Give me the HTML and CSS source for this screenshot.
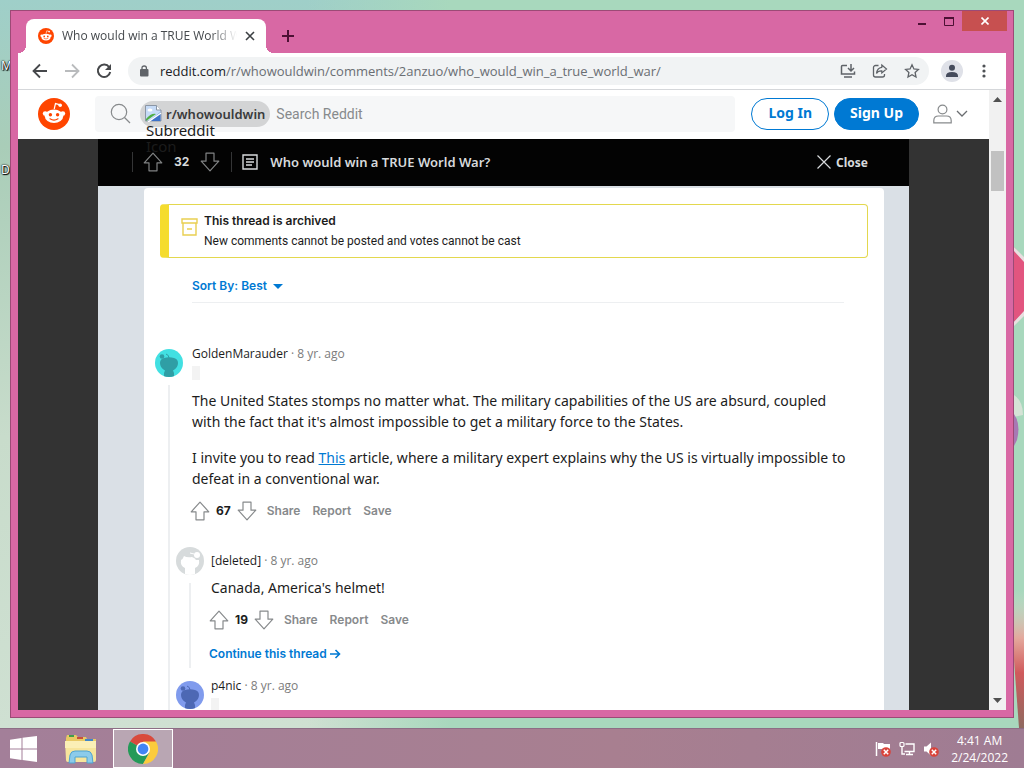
FILE: index.html
```html
<!DOCTYPE html>
<html lang="en">
<head>
<meta charset="utf-8">
<title>Who would win a TRUE World War?</title>
<link rel="stylesheet" href="styles.css">
</head>
<body>
<svg class="defs" aria-hidden="true">
  <linearGradient id="petal" x1="0" y1="0" x2="0" y2="1">
    <stop offset="0" stop-color="#d8dccf" stop-opacity="0"/>
    <stop offset=".35" stop-color="#e4a89c"/>
    <stop offset=".6" stop-color="#d05a5c"/>
    <stop offset="1" stop-color="#8f6a60"/>
  </linearGradient>
  <symbol id="snoo" viewBox="0 0 32 32">
    <circle cx="16" cy="16" r="16" fill="#ff4500"/>
    <path d="M16.2 11l1.3-5.4 4 1" fill="none" stroke="#fff" stroke-width="1.2"/>
    <circle cx="22.2" cy="7.2" r="1.8" fill="#fff"/>
    <circle cx="7.2" cy="15.6" r="2.4" fill="#fff"/>
    <circle cx="24.8" cy="15.6" r="2.4" fill="#fff"/>
    <ellipse cx="16" cy="18.2" rx="9.2" ry="6.8" fill="#fff"/>
    <circle cx="12.4" cy="16.8" r="1.7" fill="#ff4500"/>
    <circle cx="19.6" cy="16.8" r="1.7" fill="#ff4500"/>
    <path d="M12 20.8q4 2.6 8 0" fill="none" stroke="#ff4500" stroke-width="1.2" stroke-linecap="round"/>
  </symbol>
  <symbol id="up" viewBox="0 0 20 20">
    <path d="M10 1.2L1.2 10.8H6v8h8v-8h4.8z" fill="none" stroke="currentColor" stroke-width="1.2" stroke-linejoin="round"/>
  </symbol>
  <symbol id="down" viewBox="0 0 20 20">
    <path d="M10 18.8L1.2 9.2H6v-8h8v8h4.8z" fill="none" stroke="currentColor" stroke-width="1.2" stroke-linejoin="round"/>
  </symbol>
  <symbol id="avatar" viewBox="0 0 28 28">
    <path d="M5 14q0-4 4-5 5-1.500 10 0 4 1 4 5 0 5-5 7.500l1 2.500v4H9v-4l1-2.500q-5-2.500-5-7.500z" fill="currentColor"/>
    <circle cx="7" cy="7.500" r="2.300" fill="currentColor"/>
    <path d="M14 9q0-3-3-4" fill="none" stroke="currentColor" stroke-width="1"/>
  </symbol>
  <symbol id="avatar-plain" viewBox="0 0 28 28">
    <path d="M5 13q2-1 3-4 3 2 8 1 3 1 4 3l3 0q1 6-4 8v7H9v-7q-5-2-4-8z" fill="currentColor"/>
    <circle cx="21" cy="8" r="3" fill="currentColor"/>
    <path d="M14 6l4 1" stroke="currentColor"/>
  </symbol>
</svg>

<main class="desktop">
  <span class="desk-label desk-label-a">M</span>
  <span class="desk-label desk-label-b">D</span>
  <svg class="wallpaper" viewBox="0 0 10 728" preserveAspectRatio="none" aria-hidden="true">
    <path d="M0 247l10 12v53L0 322z" fill="#e2557f"/>
    <path d="M0 247l10 10v5L0 251zM0 322l10-11v5L0 326z" fill="#e8dfe0"/>
    <path d="M0 395q9 6 9 20l-9 2z" fill="#d5e3d6"/>
    <path d="M0 414q7 10 3 26l-3 6z" fill="#a878b4"/>
    <path d="M0 590h10v138H5L0 660z" fill="url(#petal)"/>
  </svg>

  <section class="window">
    <header class="titlebar">
      <div class="tab">
        <svg class="favicon"><use href="#snoo"/></svg>
        <span class="tab-title">Who would win a TRUE World War?</span>
        <button class="bare" aria-label="Close tab"><svg width="10" height="10" viewBox="0 0 10 10"><path d="M1 1l8 8M9 1l-8 8" stroke="#3c4043" stroke-width="1.600"/></svg></button>
      </div>
      <button class="bare new-tab" aria-label="New tab"><svg width="12" height="12" viewBox="0 0 12 12"><path d="M6 0v12M0 6h12" stroke="#4d1034" stroke-width="2"/></svg></button>
      <div class="win-controls">
        <button class="win-btn" aria-label="Minimize"><svg width="10" height="10" viewBox="0 0 10 10"><path d="M1 8h8" stroke="#4d1034" stroke-width="2"/></svg></button>
        <button class="win-btn" aria-label="Maximize"><svg width="10" height="9" viewBox="0 0 10 9"><path d="M.5 1v7.500h9V1" fill="none" stroke="#4d1034"/><path d="M0 1h10" stroke="#4d1034" stroke-width="2"/></svg></button>
        <button class="win-btn win-close" aria-label="Close"><svg width="8" height="8" viewBox="0 0 8 8"><path d="M.5.500l7 7M7.500.500l-7 7" stroke="#fff" stroke-width="1.600"/></svg></button>
      </div>
    </header>

    <div class="toolbar">
      <nav class="nav-buttons">
        <button class="bare" aria-label="Back"><svg width="16" height="16" viewBox="0 0 16 16"><path d="M15 8H2M8 1.500L1.500 8 8 14.500" fill="none" stroke="#46484b" stroke-width="1.800"/></svg></button>
        <button class="bare" aria-label="Forward"><svg width="16" height="16" viewBox="0 0 16 16"><path d="M1 8h13M8 1.500L14.500 8 8 14.500" fill="none" stroke="#b9bbbd" stroke-width="1.800"/></svg></button>
        <button class="bare" aria-label="Reload"><svg width="16" height="16" viewBox="0 0 16 16"><path d="M13.200 4.200A6.200 6.200 0 1 0 14.200 9" fill="none" stroke="#46484b" stroke-width="2"/><path d="M15 1v6H9z" fill="#46484b"/></svg></button>
      </nav>
      <div class="omnibox">
        <svg width="10" height="12" viewBox="0 0 10 12"><rect x="1" y="4" width="8.500" height="7.500" rx="1" fill="#5f6368"/><path d="M3 5V3q0-2 2.200-2t2.200 2v2" fill="none" stroke="#5f6368" stroke-width="1.300"/></svg>
        <span class="url"><b>reddit.com</b>/r/whowouldwin/comments/2anzuo/who_would_win_a_true_world_war/</span>
        <button class="bare" aria-label="Install app"><svg width="16" height="16" viewBox="0 0 16 16"><path d="M7 2.500H2.500a1 1 0 0 0-1 1V11h13V8.500M4 14h8M11 1v6.500M8 5l3 3 3-3" fill="none" stroke="#5f6368" stroke-width="1.500"/></svg></button>
        <button class="bare" aria-label="Share page"><svg width="16" height="16" viewBox="0 0 16 16"><path d="M6.500 2.500H3.500a2 2 0 0 0-2 2V12a2 2 0 0 0 2 2h7a2 2 0 0 0 2-2v-1" fill="none" stroke="#5f6368" stroke-width="1.300"/><path d="M9.800 2L14.500 6 9.800 10V7.800Q6 7.600 4.500 10.500 5 5 9.800 4.300z" fill="none" stroke="#5f6368" stroke-width="1.200"/></svg></button>
        <button class="bare" aria-label="Bookmark"><svg width="16" height="16" viewBox="0 0 16 16"><path d="M8 1.800l1.900 4.100 4.500.5-3.300 3.100.9 4.500L8 11.700 4 14l.9-4.500L1.600 6.400l4.500-.5z" fill="none" stroke="#5f6368" stroke-width="1.300"/></svg></button>
      </div>
      <button class="bare profile" aria-label="Profile"><svg width="22" height="22" viewBox="0 0 22 22"><circle cx="11" cy="11" r="11" fill="#dfe1e8"/><circle cx="11" cy="7.800" r="3" fill="#454b5c"/><path d="M5 16q0-4 6-4t6 4v1H5z" fill="#454b5c"/></svg></button>
      <button class="bare menu-dots" aria-label="Menu"><svg width="4" height="14" viewBox="0 0 4 14"><g fill="#4f5256"><circle cx="2" cy="2" r="1.600"/><circle cx="2" cy="7" r="1.600"/><circle cx="2" cy="12" r="1.600"/></g></svg></button>
    </div>

    <div class="viewport">
      <div class="page">
        <header class="site-header">
          <a class="logo" href="#" aria-label="Reddit"><svg width="32" height="32"><use href="#snoo"/></svg></a>
          <div class="search">
            <svg width="21" height="21" viewBox="0 0 21 21"><circle cx="9" cy="9" r="7.700" fill="none" stroke="#878a8c" stroke-width="1.200"/><path d="M14.500 14.500l5.500 5.500" stroke="#878a8c" stroke-width="1.200"/></svg>
            <span class="chip">
              <svg width="17" height="17" viewBox="0 0 17 17"><path d="M.5.500h11l4.500 4.500v11H.5z" fill="#c6dbf7" stroke="#8b96a5"/><path d="M11.500.500V5H16" fill="#fff" stroke="#8b96a5"/><ellipse cx="5" cy="5" rx="2.500" ry="1.500" fill="#fff"/><path d="M1 16v-2q5-6 10-5z" fill="#4fae45"/><path d="M4 16L15.500 7v9z" fill="#3d72c9"/><path d="M3 17L16 8" stroke="#fff" stroke-width="1.500"/></svg>
              r/whowouldwin
              <span class="alt-text">Subreddit Icon</span>
            </span>
            <input class="search-input" type="text" aria-label="Search Reddit" placeholder="Search Reddit">
          </div>
          <div class="account">
            <button class="pill pill-outline">Log In</button>
            <button class="pill pill-solid">Sign Up</button>
            <button class="bare user-menu" aria-label="User menu"><svg width="19" height="20" viewBox="0 0 19 20"><g fill="none" stroke="#878a8c" stroke-width="1.200"><circle cx="9.500" cy="5.500" r="4.400"/><path d="M.8 18.800v-2q0-4.800 4.700-4.800h8q4.700 0 4.700 4.800v2z"/></g></svg><svg width="12" height="8" viewBox="0 0 12 8"><path d="M1 1l5 5 5-5" fill="none" stroke="#6a6d70" stroke-width="1.300"/></svg></button>
          </div>
        </header>

        <div class="backdrop">
          <div class="overlay">
            <div class="post-bar">
              <div class="post-votes">
                <button class="bare" aria-label="Upvote post"><svg class="arrow"><use href="#up"/></svg></button>
                <span>32</span>
                <button class="bare" aria-label="Downvote post"><svg class="arrow"><use href="#down"/></svg></button>
              </div>
              <svg width="16" height="16" viewBox="0 0 16 16"><path d="M1 1h14v14H1zM4 5h8M4 8h8M4 11h6" fill="none" stroke="#d7dadc" stroke-width="1.400"/></svg>
              <h1 class="post-title">Who would win a TRUE World War?</h1>
              <button class="bare close-post"><svg width="14" height="14" viewBox="0 0 14 14"><path d="M.5.500l13 13M13.500.500l-13 13" stroke="#d7dadc" stroke-width="1.200"/></svg>Close</button>
            </div>

            <div class="thread">
              <div class="archived">
                <svg width="17" height="18" viewBox="0 0 17 18"><path d="M1 1h15v4H1zM2 5v12h13V5M6 11h5" fill="none" stroke="#e9cf52" stroke-width="1.400"/></svg>
                <div>
                  <strong>This thread is archived</strong>
                  <p>New comments cannot be posted and votes cannot be cast</p>
                </div>
              </div>

              <div class="sort"><button class="bare sort-btn">Sort By: Best <svg width="10" height="5" viewBox="0 0 10 5"><path d="M0 0h10L5 5z" fill="#0079d3"/></svg></button></div>

              <article class="comment">
                <div class="rail">
                  <svg class="avatar avatar-teal"><use href="#avatar"/></svg>
                  <i class="line"></i>
                </div>
                <div class="comment-main">
                  <p class="byline"><a href="#">GoldenMarauder</a> · 8 yr. ago</p>
                  <span class="flair"></span>
                  <div class="text">
                    <p>The United States stomps no matter what. The military capabilities of the US are absurd, coupled with the fact that it's almost impossible to get a military force to the States.</p>
                    <p>I invite you to read <a href="#">This</a> article, where a military expert explains why the US is virtually impossible to defeat in a conventional war.</p>
                  </div>
                  <div class="actions">
                    <button class="bare" aria-label="Upvote"><svg class="arrow"><use href="#up"/></svg></button>
                    <b>67</b>
                    <button class="bare" aria-label="Downvote"><svg class="arrow"><use href="#down"/></svg></button>
                    <button class="bare action">Share</button>
                    <button class="bare action">Report</button>
                    <button class="bare action">Save</button>
                  </div>

                  <div class="replies">
                    <article class="comment reply reply-short">
                      <div class="rail">
                        <svg class="avatar avatar-grey"><use href="#avatar-plain"/></svg>
                        <i class="line"></i>
                      </div>
                      <div class="comment-main">
                        <p class="byline"><a href="#">[deleted]</a> · 8 yr. ago</p>
                        <div class="text"><p>Canada, America's helmet!</p></div>
                        <div class="actions">
                          <button class="bare" aria-label="Upvote"><svg class="arrow"><use href="#up"/></svg></button>
                          <b>19</b>
                          <button class="bare" aria-label="Downvote"><svg class="arrow"><use href="#down"/></svg></button>
                          <button class="bare action">Share</button>
                          <button class="bare action">Report</button>
                          <button class="bare action">Save</button>
                        </div>
                        <a class="continue" href="#">Continue this thread<svg width="11" height="10" viewBox="0 0 11 10"><path d="M0 5h9M5.500 1l4 4-4 4" fill="none" stroke="#0079d3" stroke-width="1.600"/></svg></a>
                      </div>
                    </article>
                    <article class="comment reply">
                      <div class="rail"><svg class="avatar avatar-blue"><use href="#avatar"/></svg></div>
                      <div class="comment-main">
                        <p class="byline"><a href="#">p4nic</a> · 8 yr. ago</p>
                        <span class="flair"></span>
                      </div>
                    </article>
                  </div>
                </div>
              </article>
            </div>
          </div>
        </div>
      </div>

      <div class="scrollbar" aria-hidden="true">
        <svg width="9" height="5" viewBox="0 0 9 5"><path d="M0 5l4.500-5L9 5z" fill="#505050"/></svg>
        <div class="track"><div class="thumb"></div></div>
        <svg width="9" height="5" viewBox="0 0 9 5"><path d="M0 0l4.500 5L9 0z" fill="#505050"/></svg>
      </div>
    </div>
  </section>
</main>

<footer class="taskbar">
  <button class="task" aria-label="Start"><svg width="28" height="26" viewBox="0 0 28 26"><path d="M0 3.800l11.500-1.800v10.500H0zM12.500 1.800L27 0v12.500H12.500zM0 13.500h11.500V24L0 22.200zM12.500 13.500H27V26l-14.500-1.900z" fill="#fff"/></svg></button>
  <button class="task" aria-label="File Explorer"><svg width="34" height="30" viewBox="0 0 34 30"><path d="M2 4l1-3h9l2 2h8l1 2h9v4H2z" fill="#e8c964"/><path d="M5 2h5" stroke="#3f9d4c" stroke-width="2"/><path d="M13 4h6" stroke="#c7503a" stroke-width="2"/><path d="M21 6h8" stroke="#3f86c8" stroke-width="2"/><path d="M1 7h31v19q0 2-2 2H4q-2 0-2-2z" fill="#f7e59c"/><path d="M1 7h31v7H1z" fill="#fbefb6"/><path d="M5 29l1-8q1-4 5-4h12q4 0 5 4l1 8h-6v-6H11v6z" fill="#8ccbea" stroke="#4fa3d0"/></svg></button>
  <button class="task task-active" aria-label="Chrome"><svg width="30" height="30" viewBox="0 0 30 30"><path d="M15 15L2 7.500A15 15 0 0 1 28 7.500z" fill="#d94a3d"/><path d="M15 15L2 7.500A15 15 0 0 0 15 30l6-11z" fill="#249a58"/><path d="M15 7.500h13A15 15 0 0 1 15 30l6.500-11.200z" fill="#fbcb3c"/><circle cx="15" cy="15" r="7" fill="#fff"/><circle cx="15" cy="15" r="5.400" fill="#4285f4"/></svg></button>
  <div class="tray">
    <svg width="16" height="16" viewBox="0 0 16 16"><path d="M1.500 1v14" stroke="#fff" stroke-width="1.500"/><path d="M3 2h5l1 1h6v6H8L7 8H3z" fill="#fff"/><circle cx="11" cy="11" r="4.800" fill="#d9433a"/><path d="M8.800 8.800l4.400 4.400M13.200 8.800l-4.400 4.400" stroke="#fff" stroke-width="1.500"/></svg>
    <svg width="16" height="16" viewBox="0 0 16 16"><path d="M6.500 3H15v7.500H5.500M10.500 10.500V13M7 13.500h7M3 6v7h3" fill="none" stroke="#fff" stroke-width="1.400"/><rect x="1" y="1.500" width="4" height="4" rx="1" fill="none" stroke="#fff" stroke-width="1.200"/></svg>
    <svg width="16" height="16" viewBox="0 0 16 16"><path d="M1 5.500h2.500L8 1.500v13l-4.500-4H1z" fill="#fff"/><circle cx="11" cy="11" r="4.800" fill="#d9433a"/><path d="M8.800 8.800l4.400 4.400M13.200 8.800l-4.400 4.400" stroke="#fff" stroke-width="1.500"/></svg>
  </div>
  <div class="clock"><span>4:41 AM</span><span>2/24/2022</span></div>
</footer>
</body>
</html>
```

FILE: styles.css
```css
* { box-sizing: border-box; }

body {
  margin: 0;
  height: 100vh;
  display: flex;
  flex-direction: column;
  overflow: hidden;
  font-family: "Noto Sans", "Open Sans", sans-serif;
  color: #1c1c1c;
}

p, h1 { margin: 0; }
svg { display: block; flex: none; }
.defs { position: absolute; width: 0; height: 0; }

.bare {
  display: flex;
  align-items: center;
  padding: 0;
  border: 0;
  background: none;
  color: inherit;
  font: inherit;
}

/* Desktop */
.desktop {
  position: relative;
  flex: 1;
  min-height: 0;
  display: flex;
  padding: 10px;
  background: linear-gradient(#9fcfc9, #a9cdb8 20%, #c8dccb 60%, #cfe0d2);
}
.desktop::before {
  content: "";
  position: absolute;
  inset: 0 0 0 30%;
  background: linear-gradient(90deg, transparent, #a8d8bd 20%);
}
.wallpaper { position: absolute; right: 0; top: 0; width: 10px; height: 100%; }
.desk-label {
  position: absolute;
  left: 1px;
  font-size: 12px;
  line-height: 16px;
  color: #fff;
  text-shadow: 0 0 2px #000, 0 0 1px #000, 1px 1px 1px #000;
}
.desk-label-a { top: 58px; }
.desk-label-b { top: 162px; }

.window {
  position: relative;
  flex: 1;
  min-width: 0;
  display: flex;
  flex-direction: column;
  padding: 0 7px 7px;
  border: 1px solid #9c4a76;
  background: #d868a4;
}

/* Browser chrome */
.titlebar { display: flex; height: 42px; }
.tab {
  position: relative;
  display: flex;
  align-items: center;
  gap: 8px;
  width: 240px;
  margin: 8px 0 0 8px;
  padding: 0 11px 0 12px;
  border-radius: 8px 8px 0 0;
  background: #fff;
}
.tab::before,
.tab::after {
  content: "";
  position: absolute;
  bottom: 0;
  width: 8px;
  height: 8px;
}
.tab::before { right: 100%; background: radial-gradient(circle at 0 0, transparent 8px, #fff 8px); }
.tab::after { left: 100%; background: radial-gradient(circle at 100% 0, transparent 8px, #fff 8px); }
.favicon { width: 16px; height: 16px; }
.tab-title {
  flex: 1;
  overflow: hidden;
  white-space: nowrap;
  font-family: "Open Sans", sans-serif;
  font-size: 12px;
  line-height: 16px;
  color: #45494d;
  mask-image: linear-gradient(90deg, #000 85%, transparent);
}
.new-tab { align-self: center; margin: 8px 0 0 16px; }
.win-controls { display: flex; align-items: flex-start; margin: 0 -1px 0 auto; }
.win-btn {
  display: grid;
  place-items: center;
  width: 27px;
  height: 20px;
  padding: 0;
  border: 0;
  background: none;
}
.win-close { width: 45px; background: #c75050; }

.toolbar {
  display: flex;
  align-items: center;
  height: 37px;
  padding: 0 20px 0 14px;
  border-bottom: 1px solid #d5d7da;
  background: #fff;
}
.nav-buttons { display: flex; gap: 16px; }
.omnibox {
  flex: 1;
  display: flex;
  align-items: center;
  gap: 16px;
  height: 28px;
  margin: 0 12px 0 16px;
  padding: 0 9px 0 11px;
  border-radius: 14px;
  background: #f1f3f4;
}
.url {
  flex: 1;
  margin-left: -5px;
  font-family: "Open Sans", sans-serif;
  font-size: 13px;
  line-height: 20px;
  color: #6a6e73;
}
.url b { font-weight: 400; color: #202124; }
.menu-dots { margin-left: 19px; }

.viewport { flex: 1; min-height: 0; display: flex; }
.page { flex: 1; min-width: 0; display: flex; flex-direction: column; }
.scrollbar {
  display: flex;
  flex-direction: column;
  align-items: center;
  width: 17px;
  padding: 7px 0;
  background: #f1f1f1;
}
.track { flex: 1; align-self: stretch; padding: 49px 2px 0; }
.thumb { height: 40px; background: #c1c1c1; }

/* Site header */
.site-header {
  display: flex;
  align-items: center;
  height: 49px;
  padding: 0 21px 2px 20px;
  background: #fff;
}
.search {
  flex: 1;
  display: flex;
  align-items: center;
  height: 36px;
  margin: 0 16px 0 25px;
  padding-left: 15px;
  border-radius: 4px;
  background: #f6f7f8;
}
.chip {
  position: relative;
  display: flex;
  align-items: center;
  gap: 4px;
  margin-left: 9px;
  padding: 0 5px;
  border-radius: 13px;
  background: #d3d4d5;
  font-family: "Noto Sans", sans-serif;
  font-size: 13px;
  font-weight: 600;
  line-height: 26px;
  color: #3a3b3c;
}
.alt-text {
  position: absolute;
  z-index: 1;
  left: 6px;
  top: 21px;
  width: 80px;
  font-size: 15px;
  font-weight: 400;
  line-height: 16px;
  color: #1c1c1c;
}
.search-input {
  flex: 1;
  min-width: 0;
  padding: 0 6px;
  border: 0;
  background: none;
  font-family: Roboto, sans-serif;
  font-size: 14px;
}
.search-input::placeholder { color: #878a8c; }
.account { display: flex; align-items: center; gap: 5px; }
.pill {
  height: 32px;
  padding: 0 15px 2px;
  border: 1px solid #0079d3;
  border-radius: 16px;
  font-family: "Noto Sans", sans-serif;
  font-size: 14px;
  line-height: 20px;
  font-weight: 700;
}
.pill-outline { padding: 0 16px 2px; background: #fff; color: #0079d3; }
.pill-solid { background: #0079d3; color: #fff; }
.user-menu { gap: 4px; margin-left: 9px; }

/* Post overlay */
.backdrop { flex: 1; min-height: 0; display: flex; padding: 0 80px; background: #333; }
.overlay {
  flex: 1;
  min-width: 0;
  display: flex;
  flex-direction: column;
  overflow: hidden;
  background: #dae0e6;
}
.post-bar {
  flex: none;
  display: flex;
  align-items: center;
  height: 47px;
  padding: 0 41px 1px 34px;
  background: #030303;
  color: #d7dadc;
}
.post-votes {
  display: flex;
  align-items: center;
  gap: 11px;
  padding: 0 11px 0 10px;
  margin-right: 10px;
  border: solid #343536;
  border-width: 0 1px;
  font: 700 12px/16px Inter, sans-serif;
}
.post-votes .arrow { color: #818384; }
.post-title { margin-left: 12px; font-size: 13px; font-weight: 600; line-height: 20px; }
.close-post { margin-left: auto; gap: 5px; font-size: 12px; font-weight: 700; }
.arrow { width: 20px; height: 20px; }

.thread {
  flex: 1;
  margin: 2px 25px 0 46px;
  padding: 16px 16px 0;
  border-radius: 4px 4px 0 0;
  background: #fff;
}
.archived {
  display: flex;
  align-items: flex-start;
  gap: 6px;
  padding: 6px 12px;
  border: 1px solid #e3d84e;
  border-left: 9px solid #f5dc2e;
  border-radius: 4px;
  font: 12px/20px Roboto, sans-serif;
}
.archived svg { margin-top: 7px; }
.archived strong { display: block; font-family: Inter, sans-serif; font-weight: 600; }

.sort {
  margin: 18px 24px 0 32px;
  padding-bottom: 6px;
  border-bottom: 1px solid #edeff1;
}
.sort-btn {
  gap: 6px;
  color: #0079d3;
  font: 600 12px/20px Inter, sans-serif;
}

/* Comments */
.comment { display: flex; gap: 9px; margin: 43px 22px 0 -5px; }
.rail { display: flex; flex-direction: column; align-items: center; gap: 8px; width: 28px; padding-top: 3px; }
.line { flex: 1; width: 2px; background: #edeff1; }
.avatar { width: 28px; height: 28px; border-radius: 50%; }
.avatar-teal { background: #42e0e2; color: #2f9ea5; }
.avatar-grey { background: #d7dbdc; color: #fff; }
.avatar-blue { background: #809bed; color: #4d68b4; }
.comment-main { flex: 1; min-width: 0; }
.byline { font: 12px/16px "Open Sans", sans-serif; color: #7c7c7c; }
.byline a { color: #1c1c1c; font-weight: 500; text-decoration: none; }
.flair { display: block; width: 8px; height: 14px; margin: 4px 0 10px; background: #f3f3f3; }
.text { font-size: 14px; line-height: 21px; }
.text p + p { margin-top: 15px; }
.text a { color: #0079d3; }
.actions {
  display: flex;
  align-items: center;
  height: 24px;
  margin: 10px 0 0 -2px;
  color: #878a8c;
  font: 600 12px/16px Inter, sans-serif;
}
.actions b { margin: 0 6px; color: #1c1c1c; font-weight: 700; }
.action { margin-left: 10px; }
.action + .action { margin-left: 12px; }
.replies { margin-left: -16px; }
.reply { gap: 7px; margin: 30px 0 0; }
.reply-short .rail { padding-top: 0; margin-top: -6px; }
.reply .text { margin-top: 8px; }
.reply + .reply { margin-top: 10px; }
.continue {
  display: flex;
  align-items: center;
  gap: 3px;
  margin: 14px 0 0 -2px;
  padding-bottom: 6px;
  color: #0079d3;
  font: 600 12px/16px Inter, sans-serif;
  text-decoration: none;
}

/* Taskbar */
.taskbar {
  display: flex;
  align-items: center;
  height: 40px;
  padding-right: 16px;
  border-top: 1px solid #8d6d85;
  background: linear-gradient(90deg, #a37f99, #a87f90 60%, #9f7c93);
}
.task {
  display: grid;
  place-items: center;
  width: 48px;
  height: 39px;
  padding: 0;
  border: 1px solid transparent;
  background: none;
}
.task + .task { width: 65px; }
.task + .task-active { width: 60px; border-color: #fff; background: #b9a6b3; }
.tray { display: flex; gap: 8px; margin: 0 12px 0 auto; }
.clock {
  display: flex;
  flex-direction: column;
  align-items: center;
  color: #fff;
  font: 12px/17px "Open Sans", sans-serif;
}
```
